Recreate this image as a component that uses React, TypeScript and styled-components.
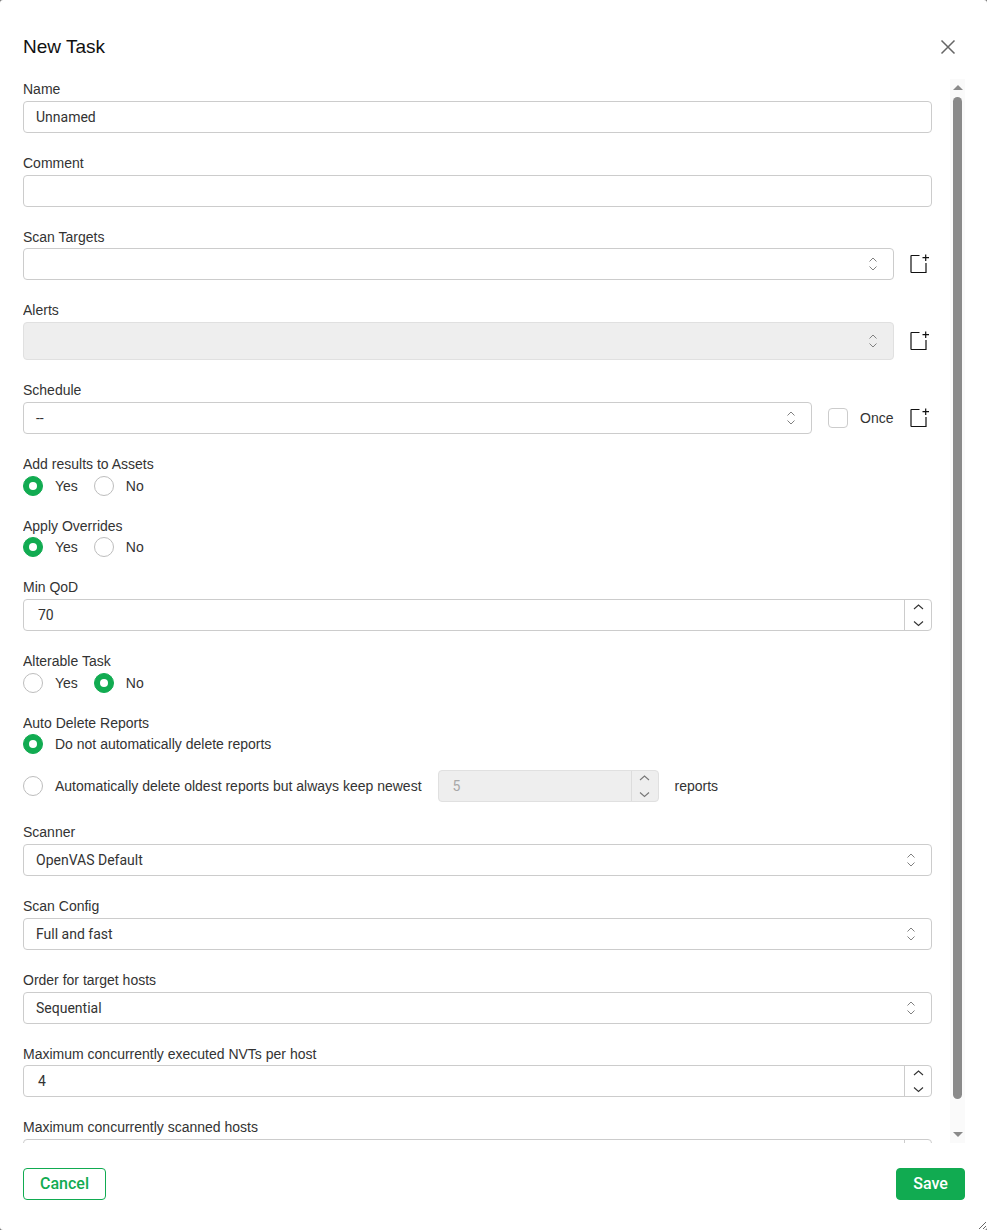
import React from 'react';
import styled, { createGlobalStyle } from 'styled-components';

const GREEN = '#11ab51';
const BORDER = '#cccccc';
const DISABLED_BG = '#eeeeee';
const SCROLL_GREY = '#8a8a8a';

const GlobalStyle = createGlobalStyle`
  html, body {
    margin: 0;
    padding: 0;
    background: #777777;
  }
  * {
    box-sizing: border-box;
  }
`;

const Dialog = styled.div`
  display: flex;
  flex-direction: column;
  width: 987px;
  height: 100vh;
  padding: 0 22px 0 23px;
  overflow: hidden;
  resize: both;
  background: #ffffff;
  border-radius: 3px;
  color: #333333;
  font-family: 'Liberation Sans', Arial, sans-serif;
  font-size: 14px;
`;

const Header = styled.header`
  flex: none;
  display: flex;
  align-items: center;
  justify-content: space-between;
  height: 79.33px;
  padding: 15px 9px 0 0;
`;

const Title = styled.h2`
  margin: 0;
  color: #111111;
  font-size: 19px;
  font-weight: 400;
  line-height: 1.55;
`;

const CloseButton = styled.button`
  display: flex;
  padding: 0;
  border: 0;
  background: none;
  color: #666666;
`;

const Body = styled.div`
  flex: 1;
  min-height: 0;
  display: flex;
`;

const ScrollArea = styled.div`
  flex: 1;
  min-width: 0;
  display: flex;
  flex-direction: column;
  gap: 20px;
  padding-right: 18px;
  overflow: hidden;
`;

const ScrollRail = styled.div`
  flex: none;
  display: flex;
  flex-direction: column;
  width: 15px;
  background: #fafafa;
`;

const RailArrow = styled.div<{ $down?: boolean }>`
  flex: none;
  display: flex;
  align-items: center;
  justify-content: center;
  height: 18px;
  padding-bottom: ${(props) => (props.$down ? '0' : '2px')};

  &::before {
    content: '';
    border-left: 5px solid transparent;
    border-right: 5px solid transparent;
    border-${(props) => (props.$down ? 'top' : 'bottom')}: 5px solid ${SCROLL_GREY};
  }
`;

const RailTrack = styled.div`
  flex: 1;
  min-height: 0;
  padding: 0 3px;
`;

const RailThumb = styled.div`
  height: 1002px;
  border-radius: 5px;
  background: ${SCROLL_GREY};
`;

const FieldBox = styled.div`
  flex: none;
  display: flex;
  flex-direction: column;
`;

const Label = styled.label`
  color: #333333;
  font-size: 14px;
  line-height: 1.55;
`;

const Row = styled.div`
  display: flex;
  align-items: center;
  gap: 16px;
`;

const TextInput = styled.input`
  width: 100%;
  height: 32px;
  padding: 0 12px;
  border: 1px solid ${BORDER};
  border-radius: 4px;
  outline: none;
  background: #ffffff;
  color: #333333;
  font-family: Roboto, sans-serif;
  font-size: 14px;
`;

const SelectBox = styled.div<{ $disabled?: boolean; $tall?: boolean }>`
  flex: 1;
  min-width: 0;
  display: flex;
  align-items: center;
  justify-content: space-between;
  height: ${(props) => (props.$tall ? '38.25px' : '32px')};
  padding: 0 15px 0 12px;
  border: 1px solid ${(props) => (props.$disabled ? '#e0e0e0' : BORDER)};
  border-radius: 4px;
  background: ${(props) => (props.$disabled ? DISABLED_BG : '#ffffff')};
  color: #333333;
  font-family: Roboto, sans-serif;
  font-size: 14px;
`;

const SelectIcon = styled.svg`
  flex: none;
  color: #808080;
`;

const NumberBox = styled.div<{ $disabled?: boolean; $width?: string }>`
  flex: ${(props) => (props.$width ? 'none' : '1')};
  width: ${(props) => props.$width || '100%'};
  display: flex;
  height: 32px;
  border: 1px solid ${(props) => (props.$disabled ? '#e0e0e0' : BORDER)};
  border-radius: 4px;
  background: ${(props) => (props.$disabled ? DISABLED_BG : '#ffffff')};
  color: ${(props) => (props.$disabled ? '#a8a8a8' : '#333333')};
`;

const NumberValue = styled.div`
  flex: 1;
  padding-left: 14px;
  font-family: Roboto, sans-serif;
  font-size: 14px;
  line-height: 30px;
`;

const Spinner = styled.div<{ $disabled?: boolean }>`
  flex: none;
  width: 27px;
  display: flex;
  align-items: center;
  justify-content: center;
  border-left: 1px solid ${(props) => (props.$disabled ? '#dcdcdc' : BORDER)};
  color: ${(props) => (props.$disabled ? '#777777' : '#333333')};
`;

const NewButton = styled.button`
  flex: none;
  display: flex;
  width: 22px;
  padding: 0;
  border: 0;
  background: none;
  color: #111111;
`;

const Checkbox = styled.span`
  flex: none;
  width: 20px;
  height: 20px;
  border: 1px solid ${BORDER};
  border-radius: 4px;
`;

const CheckRow = styled.div`
  flex: none;
  display: flex;
  align-items: center;
  gap: 12px;
  width: 66px;
`;

const RadioRow = styled.div`
  display: flex;
  align-items: center;
  gap: 16px;
`;

const RadioColumn = styled.div`
  display: flex;
  flex-direction: column;
  gap: 16px;
`;

const RadioItem = styled.div`
  display: flex;
  align-items: center;
  gap: 12px;
  line-height: 20px;
`;

const RadioCircle = styled.span<{ $checked?: boolean }>`
  flex: none;
  display: flex;
  align-items: center;
  justify-content: center;
  width: 20px;
  height: 20px;
  border: 1px solid ${(props) => (props.$checked ? GREEN : '#bdbdbd')};
  border-radius: 50%;
  background: ${(props) => (props.$checked ? GREEN : '#ffffff')};

  &::after {
    content: '';
    display: ${(props) => (props.$checked ? 'block' : 'none')};
    width: 8px;
    height: 8px;
    border-radius: 50%;
    background: #ffffff;
  }
`;

const Footer = styled.footer`
  flex: none;
  display: flex;
  justify-content: space-between;
  padding: 25px 0 30px;
`;

const ActionButton = styled.button<{ $primary?: boolean }>`
  height: 32px;
  padding: 0 0 2px;
  width: ${(props) => (props.$primary ? '69px' : '83px')};
  border: 1px solid ${GREEN};
  border-radius: 4px;
  background: ${(props) => (props.$primary ? GREEN : '#ffffff')};
  color: ${(props) => (props.$primary ? '#ffffff' : GREEN)};
  font-family: Roboto, sans-serif;
  font-size: 16px;
  font-weight: 500;
`;

const UpDownIcon = () => (
  <SelectIcon width="10" height="14" viewBox="0 0 10 14" fill="none" stroke="currentColor" strokeWidth="1">
    <path d="M1.5 4.5 5 1l3.5 3.5M1.5 9.5 5 13l3.5-3.5" />
  </SelectIcon>
);

const SpinnerIcon = () => (
  <svg width="11" height="24" viewBox="0 0 11 24" fill="none" stroke="currentColor" strokeWidth="1.1">
    <path d="M1 6 5.5 2 10 6M1 18.5 5.5 22.5 10 18.5" />
  </svg>
);

const NewIcon = () => (
  <svg width="20" height="20" viewBox="0 0 20 20" fill="none" stroke="currentColor" strokeWidth="1.2">
    <path d="M9.5 1.5H1.5a.5.5 0 0 0-.5.5v16a.5.5 0 0 0 .5.5H16V9" />
    <path d="M15.7 0.5v6.5M12.5 3.7H19" />
  </svg>
);

const CloseIcon = () => (
  <svg width="16" height="16" viewBox="0 0 16 16" fill="none" stroke="currentColor" strokeWidth="1.5">
    <path d="M1.5 1.5l13 13M14.5 1.5l-13 13" />
  </svg>
);

const Field: React.FC<{ label: string; children: React.ReactNode }> = ({ label, children }) => (
  <FieldBox>
    <Label>{label}</Label>
    {children}
  </FieldBox>
);

const Select: React.FC<{ value?: string; disabled?: boolean; tall?: boolean }> = ({ value, disabled, tall }) => (
  <SelectBox $disabled={disabled} $tall={tall}>
    <span>{value}</span>
    <UpDownIcon />
  </SelectBox>
);

const NumberInput: React.FC<{ value?: string; disabled?: boolean; width?: string }> = ({ value, disabled, width }) => (
  <NumberBox $disabled={disabled} $width={width}>
    <NumberValue>{value}</NumberValue>
    <Spinner $disabled={disabled}>
      <SpinnerIcon />
    </Spinner>
  </NumberBox>
);

const Radio: React.FC<{ label: string; checked?: boolean }> = ({ label, checked }) => (
  <RadioItem>
    <RadioCircle $checked={checked} />
    <span>{label}</span>
  </RadioItem>
);

const YesNo: React.FC<{ yes: boolean }> = ({ yes }) => (
  <RadioRow>
    <Radio label="Yes" checked={yes} />
    <Radio label="No" checked={!yes} />
  </RadioRow>
);

export default function App() {
  return (
    <Dialog>
      <GlobalStyle />
      <Header>
        <Title>New Task</Title>
        <CloseButton aria-label="Close">
          <CloseIcon />
        </CloseButton>
      </Header>
      <Body>
        <ScrollArea>
          <Field label="Name">
            <TextInput value="Unnamed" readOnly />
          </Field>
          <Field label="Comment">
            <TextInput value="" readOnly />
          </Field>
          <Field label="Scan Targets">
            <Row>
              <Select />
              <NewButton aria-label="New target">
                <NewIcon />
              </NewButton>
            </Row>
          </Field>
          <Field label="Alerts">
            <Row>
              <Select disabled tall />
              <NewButton aria-label="New alert">
                <NewIcon />
              </NewButton>
            </Row>
          </Field>
          <Field label="Schedule">
            <Row>
              <Select value="--" />
              <CheckRow>
                <Checkbox />
                <span>Once</span>
              </CheckRow>
              <NewButton aria-label="New schedule">
                <NewIcon />
              </NewButton>
            </Row>
          </Field>
          <Field label="Add results to Assets">
            <YesNo yes />
          </Field>
          <Field label="Apply Overrides">
            <YesNo yes />
          </Field>
          <Field label="Min QoD">
            <Row>
              <NumberInput value="70" />
            </Row>
          </Field>
          <Field label="Alterable Task">
            <YesNo yes={false} />
          </Field>
          <Field label="Auto Delete Reports">
            <RadioColumn>
              <Radio label="Do not automatically delete reports" checked />
              <Row>
                <Radio label="Automatically delete oldest reports but always keep newest" />
                <NumberInput value="5" disabled width="221px" />
                <span>reports</span>
              </Row>
            </RadioColumn>
          </Field>
          <Field label="Scanner">
            <Row>
              <Select value="OpenVAS Default" />
            </Row>
          </Field>
          <Field label="Scan Config">
            <Row>
              <Select value="Full and fast" />
            </Row>
          </Field>
          <Field label="Order for target hosts">
            <Row>
              <Select value="Sequential" />
            </Row>
          </Field>
          <Field label="Maximum concurrently executed NVTs per host">
            <Row>
              <NumberInput value="4" />
            </Row>
          </Field>
          <Field label="Maximum concurrently scanned hosts">
            <Row>
              <NumberInput />
            </Row>
          </Field>
        </ScrollArea>
        <ScrollRail>
          <RailArrow />
          <RailTrack>
            <RailThumb />
          </RailTrack>
          <RailArrow $down />
        </ScrollRail>
      </Body>
      <Footer>
        <ActionButton>Cancel</ActionButton>
        <ActionButton $primary>Save</ActionButton>
      </Footer>
    </Dialog>
  );
}
